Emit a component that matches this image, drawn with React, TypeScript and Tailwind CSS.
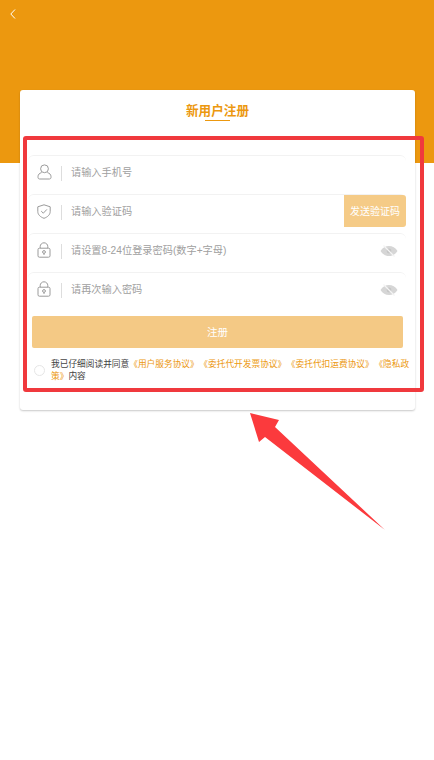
// 新用户注册 页面
const FONT = "font-['Liberation_Sans','Noto_Sans_CJK_SC',sans-serif]"

function UserIcon() {
  return (
    <svg width="15" height="16" viewBox="0 0 15 16" fill="none" stroke="#9a9a9a" strokeWidth="1">
      <circle cx="7.5" cy="4.8" r="3.9" />
      <path d="M4.6 8.6C2.4 9.2 1 10.6 1 12.6V13.4C1 14.4 1.7 15 2.6 15H12.4C13.3 15 14 14.4 14 13.4V12.6C14 10.6 12.6 9.2 10.4 8.6" />
    </svg>
  )
}

function ShieldIcon() {
  return (
    <svg width="14" height="15" viewBox="0 0 14 15" fill="none" stroke="#9a9a9a" strokeWidth="1">
      <path d="M7 .8 13.2 2.8V7.4C13.2 10.8 10.6 13 7 14.3 3.4 13 .8 10.8.8 7.4V2.8Z" />
      <path d="M4.2 7.1 6.3 9.2 9.9 5.4" />
    </svg>
  )
}

function LockIcon() {
  return (
    <svg width="14" height="16" viewBox="0 0 14 16" fill="none" stroke="#9a9a9a" strokeWidth="1">
      <path d="M3.2 6.2V4.6C3.2 2.4 4.9.8 7 .8S10.8 2.4 10.8 4.6V6.2" />
      <rect x="1" y="6.2" width="12" height="9" rx="1.4" />
      <circle cx="7" cy="10" r="1.4" />
      <path d="M7 11.4V13" />
    </svg>
  )
}

function EyeOffIcon() {
  return (
    <svg width="18" height="12" viewBox="0 0 18 12" fill="none">
      <path d="M.5 6C2.6 2.6 5.6 1 9 1s6.4 1.6 8.5 5C15.4 9.4 12.4 11 9 11S2.6 9.4.5 6Z" fill="#d6d6d6" />
      <circle cx="9" cy="6" r="2.4" fill="#c6c6c6" />
      <path d="M3.5 .5 14.5 11.5" stroke="#f4f4f4" strokeWidth="1.2" />
    </svg>
  )
}

function InputRow({ icon, placeholder, right }: { icon: React.ReactNode; placeholder: string; right?: React.ReactNode }) {
  return (
    <div className="relative mr-[1px] flex h-[39px] items-center rounded-[6px] border-t border-[#f2f2f2] pb-[4px]">
      <div className="flex w-[33px] shrink-0 justify-center pb-[2px] pr-[1px]">{icon}</div>
      <div className="h-[15px] w-px bg-[#dddddd]" />
      <div className="ml-[9px] flex-1 text-[10.2px] text-[#a0a0a0]">{placeholder}</div>
      {right}
    </div>
  )
}

export default function App() {
  return (
    <div className={`relative h-[760px] w-[434px] overflow-hidden bg-white ${FONT}`}>
      {/* ヘッダー */}
      <div className="h-[163px] bg-[#ec980f] pl-[10px] pt-[9px]">
        <svg width="6" height="10" viewBox="0 0 6 10" fill="none" stroke="#ffffff" strokeWidth="1">
          <path d="M5 .5.8 5 5 9.5" />
        </svg>
      </div>

      {/* カード */}
      <div className="mx-[20px] -mt-[73px] h-[320px] w-[395px] rounded-[3px] bg-white px-[8px] shadow-[0_1px_2px_rgba(0,0,0,0.22)]">
        <div className="flex h-[65px] flex-col items-center pt-[14px]">
          <div className="text-[12.6px] font-bold leading-[15px] text-[#ec980f]">新用户注册</div>
          <div className="mt-[1px] h-px w-[25px] bg-[#ec980f]" />
        </div>

        <InputRow icon={<UserIcon />} placeholder="请输入手机号" />
        <InputRow
          icon={<ShieldIcon />}
          placeholder="请输入验证码"
          right={
            <div className="absolute right-0 top-0 flex h-[32px] w-[62px] items-center justify-center rounded-r-[3px] bg-[#f5cb87] text-[10px] text-white">
              发送验证码
            </div>
          }
        />
        <InputRow icon={<LockIcon />} placeholder="请设置8-24位登录密码(数字+字母)" right={<div className="mr-[8px]"><EyeOffIcon /></div>} />
        <InputRow icon={<LockIcon />} placeholder="请再次输入密码" right={<div className="mr-[8px]"><EyeOffIcon /></div>} />

        <div className="ml-[4px] mt-[5px] flex h-[32px] w-[371px] items-center justify-center rounded-[2px] bg-[#f4c985] pt-[1px] text-[10.5px] text-white">
          注册
        </div>

        <div className="mt-[10px] flex items-center">
          <div className="ml-[6px] h-[11px] w-[11px] shrink-0 rounded-full border border-[#e6e6e6]" />
          <div className="ml-[6px] w-[362px] whitespace-nowrap text-[8.7px] leading-[12px] text-[#444444]">
            <div>
              我已仔细阅读并同意
              <span className="text-[#ec980f]">《用户服务协议》</span>
              <span className="ml-[5px] text-[#ec980f]">《委托代开发票协议》</span>
              <span className="ml-[5px] text-[#ec980f]">《委托代扣运费协议》</span>
              <span className="ml-[5px] text-[#ec980f]">《隐私政</span>
            </div>
            <div>
              <span className="text-[#ec980f]">策》</span>
              内容
            </div>
          </div>
        </div>
      </div>

      {/* 赤い注釈 */}
      <div className="absolute left-[23px] top-[136px] h-[256px] w-[401px] rounded-[3px] border-[4px] border-[#f0393d]" />
      <svg className="absolute left-[250px] top-[413px]" width="136" height="120" viewBox="0 0 136 120">
        <path d="M0 0 29 7 25 14 135 117 15 24 9 29Z" fill="#fb3a3d" />
      </svg>
    </div>
  )
}
